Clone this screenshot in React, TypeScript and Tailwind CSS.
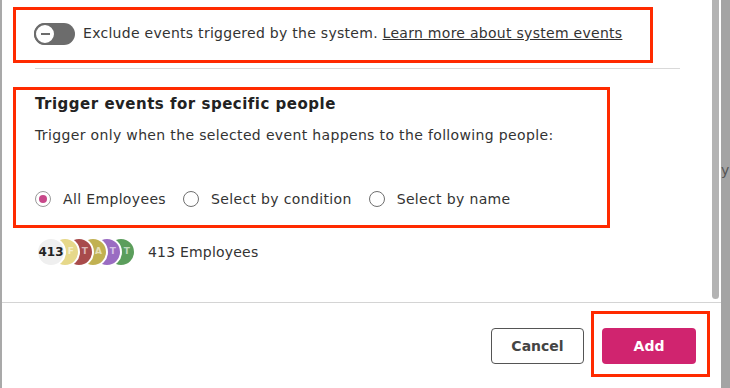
import React from 'react'

const font = { fontFamily: '"DejaVu Sans", "Open Sans", sans-serif' }

const avatars = [
  { letter: 'F', color: 'bg-[#e6d88a]' },
  { letter: 'T', color: 'bg-[#a84b4b]' },
  { letter: 'A', color: 'bg-[#c1b152]' },
  { letter: 'T', color: 'bg-[#9a6cc2]' },
  { letter: 'T', color: 'bg-[#5b9e5c]' },
]

function Radio({ label, checked }: { label: string; checked?: boolean }) {
  return (
    <label className="flex items-center gap-[12px] text-[14px] tracking-[0.35px] text-[#333]">
      <span
        className={`flex h-[16px] w-[16px] items-center justify-center rounded-full border ${
          checked ? 'border-[#9a9a9a]' : 'border-[#6f6f6f]'
        }`}
      >
        {checked && <span className="h-[8px] w-[8px] rounded-full bg-[#c8488a]" />}
      </span>
      {label}
    </label>
  )
}

export default function App() {
  return (
    <div className="flex h-[388px] w-[730px] overflow-hidden bg-white" style={font}>
      <div className="w-[2px] bg-[#a9a9a9]" />

      <div className="flex w-[719px] flex-col">
        {/* scrolling body */}
        <div className="flex h-[302px]">
          <div className="flex-1">
            <div className="ml-[11px] mt-[7px] flex h-[56px] w-[640px] items-center border-[3px] border-[#ff2a00] pb-[3px] pl-[18px]">
              <div className="relative h-[22px] w-[41px] rounded-full bg-[#6c6c6c]">
                <div className="absolute left-0 top-0 flex h-[22px] w-[22px] items-center justify-center rounded-full border-2 border-[#6c6c6c] bg-white">
                  <div className="h-[2px] w-[9px] bg-[#6c6c6c]" />
                </div>
              </div>
              <span className="ml-[8px] text-[14px] tracking-[0.28px] text-[#333]">
                Exclude events triggered by the system.{' '}
                <a className="underline">Learn more about system events</a>
              </span>
            </div>

            <div className="ml-[33px] mt-[5px] h-px w-[645px] bg-[#d9d9d9]" />

            <div className="ml-[11px] mt-[18px] w-[597px] border-[3px] border-[#ff2a00] pb-[16px] pl-[19px] pt-[4px]">
              <h2 className="text-[15px] font-bold leading-[20px] tracking-[0.5px] text-[#222]">
                Trigger events for specific people
              </h2>
              <p className="mt-[11px] text-[14px] leading-[20px] tracking-[0.35px] text-[#333]">
                Trigger only when the selected event happens to the following people:
              </p>
              <div className="mt-[44px] flex h-[20px] items-center gap-[17px]">
                <Radio label="All Employees" checked />
                <Radio label="Select by condition" />
                <Radio label="Select by name" />
              </div>
            </div>

            <div className="ml-[34px] mt-[9px] flex items-center">
              <div className="relative z-10 flex h-[30px] w-[30px] items-center justify-center rounded-full border-2 border-white bg-[#efefef] text-[12px] font-bold text-[#222]">
                413
              </div>
              {avatars.map((a, i) => (
                <div
                  key={i}
                  className={`-ml-[16px] flex h-[30px] w-[30px] items-center justify-end rounded-full border-2 border-white pr-[4px] text-[9px] font-bold text-white/60 ${a.color}`}
                  style={{ zIndex: 9 - i }}
                >
                  {a.letter}
                </div>
              ))}
              <span className="ml-[12px] text-[14px] tracking-[0.2px] text-[#333]">413 Employees</span>
            </div>
          </div>

          <div className="h-[299px] w-[7px] rounded-b-full bg-[#b3b3b3]" />
          <div className="w-[2px]" />
        </div>

        <div className="h-px bg-[#d4d4d4]" />

        {/* footer */}
        <div className="flex flex-1 items-start justify-end pr-[11px] pt-[8px]">
          <button className="mt-[17px] h-[36px] w-[93px] rounded-[4px] border border-[#555] text-[14px] font-bold text-[#444]">
            Cancel
          </button>
          <div className="ml-[7px] border-[3px] border-[#ff2a00] pb-[10px] pl-[8px] pr-[11px] pt-[14px]">
            <button className="h-[36px] w-[94px] rounded-[4px] bg-[#d0246f] text-[14px] font-bold text-white">
              Add
            </button>
          </div>
        </div>
      </div>

      <div className="flex w-[9px] flex-col bg-[#a4a4a4]">
        <span className="mt-[160px] text-[14px] leading-[20px] text-[#555]">y</span>
      </div>
    </div>
  )
}
